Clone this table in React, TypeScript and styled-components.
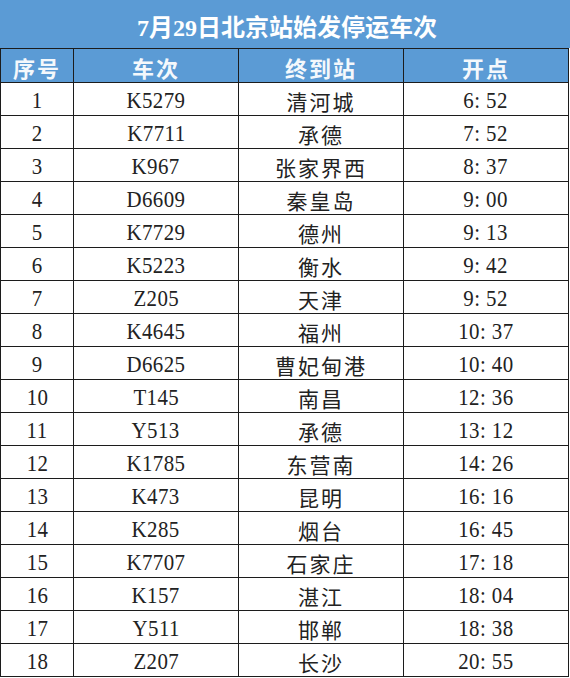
import React from "react";
import styled, { createGlobalStyle } from "styled-components";

const GlobalStyle = createGlobalStyle`
  body {
    margin: 0;
    padding: 0;
    background: #fff;
    font-family: "Liberation Serif", "Noto Sans CJK SC", serif;
  }
`;

const Page = styled.div`
  width: 570px;
`;

const Title = styled.div`
  height: 48px;
  background: #5b9bd5;
  color: #fff;
  font-size: 24px;
  font-weight: 700;
  display: flex;
  align-items: center;
  justify-content: center;
  padding: 3px 0 0 4px;
  box-sizing: border-box;
`;

const Grid = styled.div`
  width: 569px;
  display: grid;
  grid-template-columns: 72px 164px 164px 164px;
  grid-auto-rows: 32px;
  grid-template-rows: 33px;
  gap: 1px;
  padding: 1px;
  box-sizing: border-box;
  background: #1c1c1c;
`;

const HeadCell = styled.div`
  background: #5b9bd5;
  color: #f4f8fc;
  font-size: 22px;
  font-weight: 700;
  letter-spacing: 2px;
  display: flex;
  align-items: center;
  justify-content: center;
  padding-top: 2px;
`;

const Cell = styled.div<{ $cn?: boolean }>`
  background: #fff;
  color: #222;
  font-size: ${(p) => (p.$cn ? 21 : 24)}px;
  letter-spacing: ${(p) => (p.$cn ? 2 : 0.5)}px;
  display: flex;
  align-items: center;
  justify-content: center;
  padding-top: 3px;
  overflow: hidden;
`;

const Narrow = styled.span`
  display: inline-block;
  transform: scaleX(0.87);
  white-space: pre;
`;

const rows: [string, string, string][] = [
  ["K5279", "清河城", "6: 52"],
  ["K7711", "承德", "7: 52"],
  ["K967", "张家界西", "8: 37"],
  ["D6609", "秦皇岛", "9: 00"],
  ["K7729", "德州", "9: 13"],
  ["K5223", "衡水", "9: 42"],
  ["Z205", "天津", "9: 52"],
  ["K4645", "福州", "10: 37"],
  ["D6625", "曹妃甸港", "10: 40"],
  ["T145", "南昌", "12: 36"],
  ["Y513", "承德", "13: 12"],
  ["K1785", "东营南", "14: 26"],
  ["K473", "昆明", "16: 16"],
  ["K285", "烟台", "16: 45"],
  ["K7707", "石家庄", "17: 18"],
  ["K157", "湛江", "18: 04"],
  ["Y511", "邯郸", "18: 38"],
  ["Z207", "长沙", "20: 55"],
];

export default function App() {
  return (
    <>
      <GlobalStyle />
      <Page>
        <Title>7月29日北京站始发停运车次</Title>
        <Grid>
          <HeadCell>序号</HeadCell>
          <HeadCell>车次</HeadCell>
          <HeadCell>终到站</HeadCell>
          <HeadCell>开点</HeadCell>
          {rows.map(([train, dest, time], i) => (
            <React.Fragment key={train + i}>
              <Cell>
                <Narrow>{i + 1}</Narrow>
              </Cell>
              <Cell>
                <Narrow>{train}</Narrow>
              </Cell>
              <Cell $cn>{dest}</Cell>
              <Cell>
                <Narrow>{time}</Narrow>
              </Cell>
            </React.Fragment>
          ))}
        </Grid>
      </Page>
    </>
  );
}
